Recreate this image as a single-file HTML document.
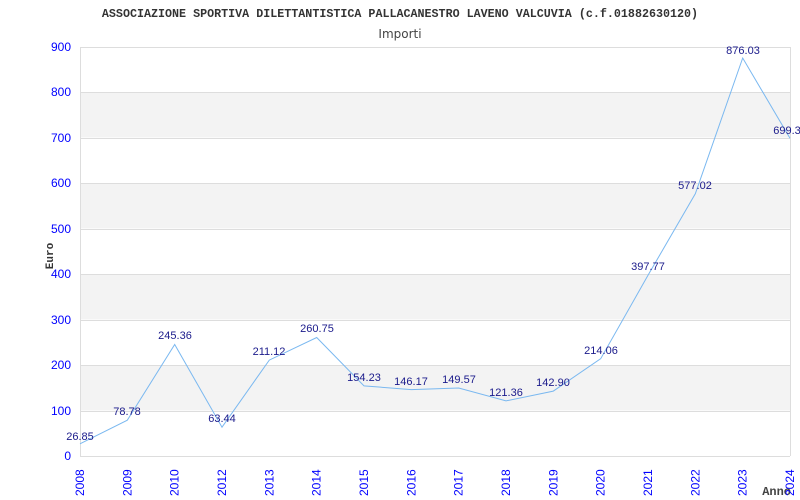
<!DOCTYPE html>
<html><head><style>body{margin:0;background:#fff}svg{display:block}</style></head><body>
<svg width="800" height="500" xmlns="http://www.w3.org/2000/svg" font-family="Liberation Sans, sans-serif">
<text x="400" y="17" text-anchor="middle" font-family="Liberation Mono, monospace" font-size="11.7" font-weight="bold" fill="#333">ASSOCIAZIONE SPORTIVA DILETTANTISTICA PALLACANESTRO LAVENO VALCUVIA (c.f.01882630120)</text>
<text x="400" y="38" text-anchor="middle" font-family="DejaVu Sans, sans-serif" font-size="12" fill="#444">Importi</text>
<g fill="#f3f3f3">
<rect x="80" y="92" width="710" height="45.4"/><rect x="80" y="183" width="710" height="45.4"/><rect x="80" y="274" width="710" height="45.4"/><rect x="80" y="365" width="710" height="45.4"/>
</g>
<g stroke="#ddd" stroke-width="1">
<line x1="80" y1="47.5" x2="790" y2="47.5"/><line x1="80" y1="92.5" x2="790" y2="92.5"/><line x1="80" y1="138.5" x2="790" y2="138.5"/><line x1="80" y1="183.5" x2="790" y2="183.5"/><line x1="80" y1="229.5" x2="790" y2="229.5"/><line x1="80" y1="274.5" x2="790" y2="274.5"/><line x1="80" y1="320.5" x2="790" y2="320.5"/><line x1="80" y1="365.5" x2="790" y2="365.5"/><line x1="80" y1="411.5" x2="790" y2="411.5"/>
<line x1="80.5" y1="47" x2="80.5" y2="456"/><line x1="80" y1="456.5" x2="790" y2="456.5"/><line x1="790.5" y1="47" x2="790.5" y2="456"/>
</g>
<g fill="#00f" font-size="12" text-anchor="end">
<text x="71" y="51">900</text><text x="71" y="96">800</text><text x="71" y="142">700</text><text x="71" y="187">600</text><text x="71" y="233">500</text><text x="71" y="278">400</text><text x="71" y="324">300</text><text x="71" y="369">200</text><text x="71" y="415">100</text><text x="71" y="460">0</text>
</g>
<text transform="translate(53,256) rotate(-90)" text-anchor="middle" font-family="Liberation Mono, monospace" font-size="11" font-weight="bold" fill="#333">Euro</text>
<text x="791" y="495" text-anchor="end" font-family="Liberation Mono, monospace" font-size="12" font-weight="bold" fill="#444">Anno</text>
<polyline fill="none" stroke="#7ab8f0" stroke-width="1" points="80,443.8 127.3,420.2 174.7,344.5 222,427.2 269.3,360.1 316.7,337.5 364,385.9 411.3,389.6 458.7,388 506,400.9 553.3,391.1 600.7,358.7 648,275.3 695.3,193.8 742.7,58 790,138.3"/>
<g fill="#00f" font-size="12">
<text transform="translate(84,496) rotate(-90)">2008</text><text transform="translate(131.3,496) rotate(-90)">2009</text><text transform="translate(178.7,496) rotate(-90)">2010</text><text transform="translate(226,496) rotate(-90)">2012</text><text transform="translate(273.3,496) rotate(-90)">2013</text><text transform="translate(320.7,496) rotate(-90)">2014</text><text transform="translate(368,496) rotate(-90)">2015</text><text transform="translate(415.3,496) rotate(-90)">2016</text><text transform="translate(462.7,496) rotate(-90)">2017</text><text transform="translate(510,496) rotate(-90)">2018</text><text transform="translate(557.3,496) rotate(-90)">2019</text><text transform="translate(604.7,496) rotate(-90)">2020</text><text transform="translate(652,496) rotate(-90)">2021</text><text transform="translate(699.3,496) rotate(-90)">2022</text><text transform="translate(746.7,496) rotate(-90)">2023</text><text transform="translate(794,496) rotate(-90)">2024</text>
</g>
<g fill="#1a1a8b" font-size="11" text-anchor="middle">
<text x="80" y="440">26.85</text><text x="127" y="415">78.78</text><text x="175" y="339">245.36</text><text x="222" y="422">63.44</text><text x="269" y="355">211.12</text><text x="317" y="332">260.75</text><text x="364" y="381">154.23</text><text x="411" y="385">146.17</text><text x="459" y="383">149.57</text><text x="506" y="396">121.36</text><text x="553" y="386">142.90</text><text x="601" y="354">214.06</text><text x="648" y="270">397.77</text><text x="695" y="189">577.02</text><text x="743" y="54">876.03</text><text x="787" y="134">699.3</text>
</g>
</svg>
</body></html>
